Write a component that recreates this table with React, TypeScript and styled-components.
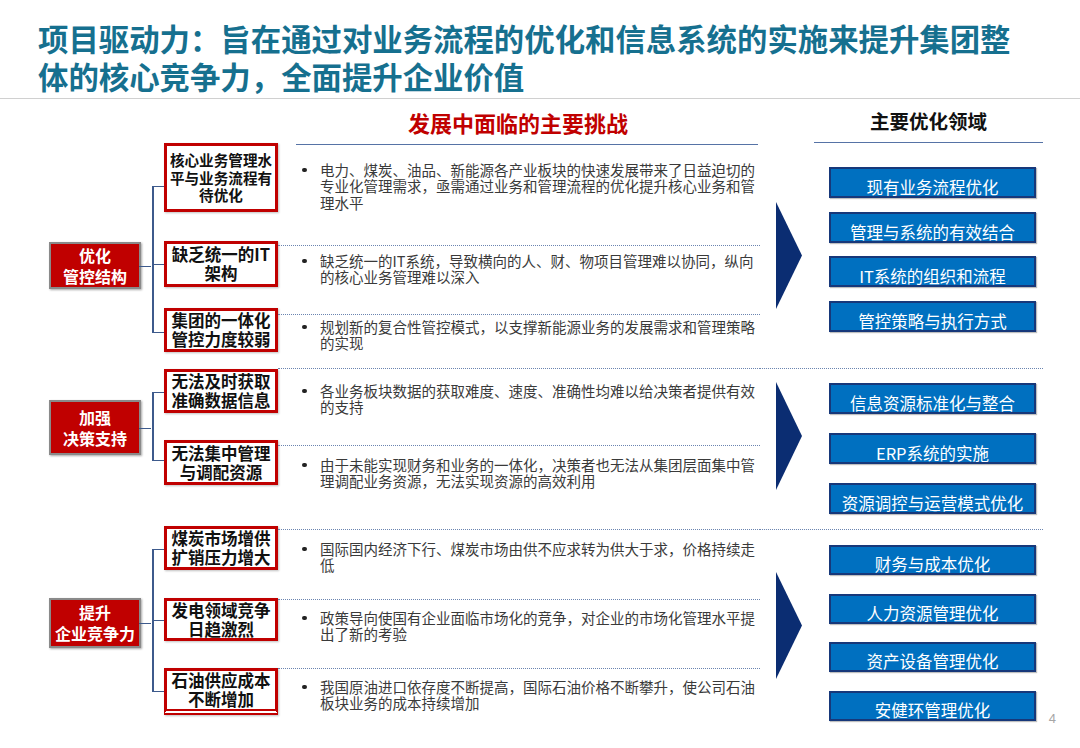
import styled, { createGlobalStyle } from "styled-components";

const GlobalStyle = createGlobalStyle`
  * { box-sizing: border-box; }
  body { margin: 0; background: #fff; }
`;

const FONT = `"Noto Sans CJK SC", "Noto Sans", "Liberation Sans", sans-serif`;

const Slide = styled.div`
  position: relative;
  width: 1080px;
  height: 748px;
  overflow: hidden;
  background: #fff;
  font-family: ${FONT};
`;

const TitleBar = styled.header`
  padding: 19px 0 3px 38px;
  border-bottom: 1.5px solid #d0d0d0;
`;

const Title = styled.h1`
  margin: 0;
  font-size: 30.4px;
  line-height: 38px;
  font-weight: 700;
  color: #16708f;
`;

const Body = styled.main`
  padding-left: 49px;
`;

const HeaderRow = styled.div`
  display: flex;
  align-items: flex-start;
  padding-left: 247px;
  height: 46px;
`;

const ChallengeHeader = styled.h2`
  margin: 0;
  width: 462px;
  height: 46px;
  display: flex;
  align-items: center;
  padding-left: 112px;
  border-bottom: 1.5px solid #5673a6;
  font-size: 22px;
  font-weight: 700;
  color: #c00000;
`;

const AreaHeader = styled.h2`
  margin: 0 0 0 56px;
  width: 229px;
  height: 44px;
  display: flex;
  align-items: center;
  justify-content: center;
  border-bottom: 1.5px solid #5673a6;
  font-size: 19.5px;
  font-weight: 700;
  color: #111;
`;

const Section = styled.section`
  display: flex;
`;

const LabelCell = styled.div<{ $top: number }>`
  width: 92px;
  flex-shrink: 0;
  padding-top: ${(p) => p.$top}px;
`;

const GroupLabel = styled.div<{ $h: number }>`
  position: relative;
  height: ${(p) => p.$h}px;
  display: flex;
  flex-direction: column;
  align-items: center;
  justify-content: center;
  text-align: center;
  background: #c00000;
  border: 2px solid #8a8a8a;
  box-shadow: 1px 1px 2px rgba(0, 0, 0, 0.35);
  color: #fff;
  font-size: 16px;
  font-weight: 700;

  /* connector stub towards the branch line */
  &::after {
    content: "";
    position: absolute;
    left: 100%;
    top: 50%;
    width: 12px;
    border-top: 1.5px solid #3d5a8c;
  }
`;

const Line = styled.div<{ $lh: number }>`
  height: ${(p) => p.$lh}px;
  line-height: ${(p) => p.$lh}px;
  white-space: nowrap;
`;

const Rows = styled.div`
  display: flex;
  flex-direction: column;
  width: 619px;
  flex-shrink: 0;
`;

const Row = styled.div<{ $h?: number }>`
  display: flex;
  height: ${(p) => (p.$h ? `${p.$h}px` : "auto")};
  flex: ${(p) => (p.$h ? "none" : "1")};
`;

type Pos = "first" | "middle" | "last";

const Gutter = styled.div<{ $tick: number; $pos: Pos }>`
  position: relative;
  width: 23px;
  flex-shrink: 0;

  &::before {
    content: "";
    position: absolute;
    left: 11px;
    width: 1.5px;
    background: #3d5a8c;
    top: ${(p) => (p.$pos === "first" ? `${p.$tick}px` : "0")};
    ${(p) => (p.$pos === "last" ? `height: ${p.$tick}px;` : "bottom: 0;")}
  }

  &::after {
    content: "";
    position: absolute;
    left: 11px;
    right: 0;
    top: ${(p) => p.$tick}px;
    border-top: 1.5px solid #3d5a8c;
  }
`;

const RedBox = styled.div<{ $top: number; $h: number; $fs: number; $double?: boolean }>`
  width: 114px;
  height: ${(p) => p.$h}px;
  margin-top: ${(p) => p.$top}px;
  flex-shrink: 0;
  display: flex;
  flex-direction: column;
  align-items: center;
  justify-content: center;
  text-align: center;
  background: #fff;
  border: 3px solid #c00000;
  ${(p) => (p.$double ? "border-bottom: 6px double #c00000;" : "")}
  box-shadow: 1px 1px 2px rgba(0, 0, 0, 0.25);
  color: #111;
  font-size: ${(p) => p.$fs}px;
  font-weight: 700;
`;

const TextCell = styled.div<{ $pad: number; $first?: boolean }>`
  flex: 1;
  display: flex;
  padding: ${(p) => p.$pad}px 0 0 24px;
  border-top: ${(p) => (p.$first ? "none" : "1px dotted #6a84b0")};
`;

const Bullet = styled.span`
  width: 18px;
  height: 16.5px;
  flex-shrink: 0;
  display: flex;
  align-items: center;

  &::before {
    content: "";
    width: 4.5px;
    height: 4.5px;
    border-radius: 50%;
    background: #222;
  }
`;

const Desc = styled.p`
  margin: 0;
  width: 440px;
  font-size: 14.5px;
  line-height: 16.5px;
  color: #3a3a3a;
`;

const RightPart = styled.div<{ $divided?: boolean }>`
  width: 283px;
  flex-shrink: 0;
  display: flex;
  align-items: flex-start;
  border-top: ${(p) => (p.$divided ? "1px dotted #6a84b0" : "none")};
`;

const Arrow = styled.svg<{ $top: number }>`
  display: block;
  flex-shrink: 0;
  margin: ${(p) => p.$top}px 0 0 16px;
`;

const AreaList = styled.div<{ $top: number; $gap: number }>`
  display: flex;
  flex-direction: column;
  gap: ${(p) => p.$gap}px;
  margin-left: 27px;
  padding-top: ${(p) => p.$top}px;
`;

const AreaBox = styled.div<{ $h: number }>`
  width: 207px;
  height: ${(p) => p.$h}px;
  padding-top: ${(p) => p.$h - 23}px;
  overflow: hidden;
  white-space: nowrap;
  background: #0070c0;
  border: 2px solid #17387a;
  box-shadow: 1px 1px 1px rgba(0, 0, 0, 0.25);
  color: #fff;
  text-align: center;
  font-size: 16.5px;
  line-height: 20px;
`;

const PageNo = styled.span`
  position: absolute;
  right: 24px;
  top: 711px;
  font-family: "Liberation Sans", sans-serif;
  font-size: 13px;
  color: #a6a6a6;
`;

interface RowData {
  title: string[];
  text: string;
  h?: number;
  boxTop: number;
  boxH: number;
  tick: number;
  pad: number;
  fs?: number;
  lh?: number;
  double?: boolean;
}

interface SectionData {
  label: string[];
  labelTop: number;
  labelH: number;
  arrowTop: number;
  arrowH: number;
  listTop: number;
  listGap: number;
  areaH: number;
  rows: RowData[];
  areas: string[];
}

const sections: SectionData[] = [
  {
    label: ["优化", "管控结构"],
    labelTop: 97,
    labelH: 47,
    arrowTop: 57,
    arrowH: 107,
    listTop: 22,
    listGap: 13.5,
    areaH: 31,
    rows: [
      {
        title: ["核心业务管理水", "平与业务流程有", "待优化"],
        text: "电力、煤炭、油品、新能源各产业板块的快速发展带来了日益迫切的专业化管理需求，亟需通过业务和管理流程的优化提升核心业务和管理水平",
        h: 100,
        boxTop: -2,
        boxH: 69,
        tick: 41,
        pad: 16.5,
        fs: 14.6,
        lh: 17.5,
      },
      {
        title: ["缺乏统一的IT", "架构"],
        text: "缺乏统一的IT系统，导致横向的人、财、物项目管理难以协同，纵向的核心业务管理难以深入",
        h: 69,
        boxTop: -4,
        boxH: 46,
        tick: 19,
        pad: 6.5,
      },
      {
        title: ["集团的一体化", "管控力度较弱"],
        text: "规划新的复合性管控模式，以支撑新能源业务的发展需求和管理策略的实现",
        h: 54,
        boxTop: -6,
        boxH: 44,
        tick: 18,
        pad: 3.5,
      },
    ],
    areas: ["现有业务流程优化", "管理与系统的有效结合", "IT系统的组织和流程", "管控策略与执行方式"],
  },
  {
    label: ["加强", "决策支持"],
    labelTop: 32,
    labelH: 55,
    arrowTop: 13,
    arrowH: 108,
    listTop: 14,
    listGap: 19,
    areaH: 31,
    rows: [
      {
        title: ["无法及时获取", "准确数据信息"],
        text: "各业务板块数据的获取难度、速度、准确性均难以给决策者提供有效的支持",
        h: 77,
        boxTop: 1,
        boxH: 44,
        tick: 24,
        pad: 13.5,
      },
      {
        title: ["无法集中管理", "与调配资源"],
        text: "由于未能实现财务和业务的一体化，决策者也无法从集团层面集中管理调配业务资源，无法实现资源的高效利用",
        h: 84,
        boxTop: -5,
        boxH: 45,
        tick: 15,
        pad: 10.5,
      },
    ],
    areas: ["信息资源标准化与整合", "ERP系统的实施", "资源调控与运营模式优化"],
  },
  {
    label: ["提升", "企业竞争力"],
    labelTop: 69,
    labelH: 50,
    arrowTop: 42,
    arrowH: 107,
    listTop: 15,
    listGap: 18.5,
    areaH: 30,
    rows: [
      {
        title: ["煤炭市场增供", "扩销压力增大"],
        text: "国际国内经济下行、煤炭市场由供不应求转为供大于求，价格持续走低",
        h: 70,
        boxTop: -3,
        boxH: 44,
        tick: 20,
        pad: 10.5,
      },
      {
        title: ["发电领域竞争", "日趋激烈"],
        text: "政策导向使国有企业面临市场化的竞争，对企业的市场化管理水平提出了新的考验",
        h: 69,
        boxTop: -1,
        boxH: 43,
        tick: 21,
        pad: 9.5,
      },
      {
        title: ["石油供应成本", "不断增加"],
        text: "我国原油进口依存度不断提高，国际石油价格不断攀升，使公司石油板块业务的成本持续增加",
        boxTop: 0,
        boxH: 47,
        tick: 23,
        pad: 9.5,
        double: true,
      },
    ],
    areas: ["财务与成本优化", "人力资源管理优化", "资产设备管理优化", "安健环管理优化"],
  },
];

function Lines({ lines, lh }: { lines: string[]; lh: number }) {
  return (
    <>
      {lines.map((l, i) => (
        <Line key={i} $lh={lh}>
          {l}
        </Line>
      ))}
    </>
  );
}

function ChallengeRow({ row, pos, first }: { row: RowData; pos: Pos; first: boolean }) {
  return (
    <Row $h={row.h}>
      <Gutter $tick={row.tick} $pos={pos} />
      <RedBox $top={row.boxTop} $h={row.boxH} $fs={row.fs ?? 16.5} $double={row.double}>
        <Lines lines={row.title} lh={row.lh ?? 19} />
      </RedBox>
      <TextCell $pad={row.pad} $first={first}>
        <Bullet />
        <Desc>{row.text}</Desc>
      </TextCell>
    </Row>
  );
}

export default function App() {
  return (
    <>
      <GlobalStyle />
      <Slide>
        <TitleBar>
          <Title>
            项目驱动力：旨在通过对业务流程的优化和信息系统的实施来提升集团整
            <br />
            体的核心竞争力，全面提升企业价值
          </Title>
        </TitleBar>
        <Body>
          <HeaderRow>
            <ChallengeHeader>发展中面临的主要挑战</ChallengeHeader>
            <AreaHeader>主要优化领域</AreaHeader>
          </HeaderRow>
          {sections.map((s, si) => (
            <Section key={si}>
              <LabelCell $top={s.labelTop}>
                <GroupLabel $h={s.labelH}>
                  <Lines lines={s.label} lh={21} />
                </GroupLabel>
              </LabelCell>
              <Rows>
                {s.rows.map((r, ri) => (
                  <ChallengeRow
                    key={ri}
                    row={r}
                    pos={ri === 0 ? "first" : ri === s.rows.length - 1 ? "last" : "middle"}
                    first={si === 0 && ri === 0}
                  />
                ))}
              </Rows>
              <RightPart $divided={si > 0}>
                <Arrow $top={s.arrowTop} width="26" height={s.arrowH} viewBox={`0 0 26 ${s.arrowH}`}>
                  <polygon points={`0,0 26,${s.arrowH / 2} 0,${s.arrowH}`} fill="#0b2d72" />
                </Arrow>
                <AreaList $top={s.listTop} $gap={s.listGap}>
                  {s.areas.map((a) => (
                    <AreaBox key={a} $h={s.areaH}>
                      {a}
                    </AreaBox>
                  ))}
                </AreaList>
              </RightPart>
            </Section>
          ))}
        </Body>
        <PageNo>4</PageNo>
      </Slide>
    </>
  );
}
